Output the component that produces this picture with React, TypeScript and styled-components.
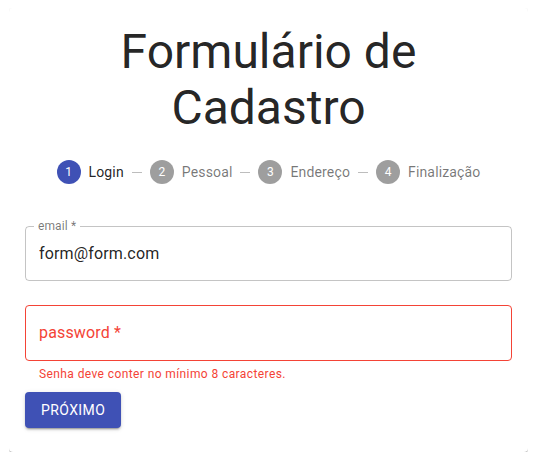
import React from "react";
import styled, { createGlobalStyle } from "styled-components";

const GlobalStyle = createGlobalStyle`
  body {
    margin: 8px 8px 8px 9px;
    background: #ffffff;
    font-family: Roboto, "Noto Sans", Arial, sans-serif;
    -webkit-font-smoothing: antialiased;
  }
  * { box-sizing: border-box; }
`;

const Card = styled.div`
  background: #fff;
  border-radius: 4px;
  box-shadow: 0px 2px 1px -1px rgba(0, 0, 0, 0.2), 0px 1px 1px 0px rgba(0, 0, 0, 0.14),
    0px 1px 3px 0px rgba(0, 0, 0, 0.12);
  padding: 16px 16px 24px;
  display: flex;
  flex-direction: column;
`;

const Title = styled.h1`
  margin: 0;
  font-family: Roboto, sans-serif;
  font-size: 48px;
  font-weight: 400;
  line-height: 56px;
  color: rgba(0, 0, 0, 0.87);
  text-align: center;
`;

const Stepper = styled.div`
  display: flex;
  justify-content: center;
  align-items: center;
  padding: 24px;
`;

const Step = styled.div`
  display: flex;
  align-items: center;
  padding: 0 8px;
`;

const StepIcon = styled.span<{ $active?: boolean }>`
  width: 24px;
  height: 24px;
  border-radius: 50%;
  background: ${(p) => (p.$active ? "#3f51b5" : "rgba(0, 0, 0, 0.38)")};
  color: #fff;
  font-size: 12px;
  line-height: 24px;
  text-align: center;
  margin-right: 8px;
  flex: none;
`;

const StepLabel = styled.span<{ $active?: boolean }>`
  font-size: 14px;
  line-height: 20px;
  color: ${(p) => (p.$active ? "rgba(0, 0, 0, 0.87)" : "rgba(0, 0, 0, 0.54)")};
  letter-spacing: 0.01071em;
`;

const Connector = styled.span`
  width: 10px;
  border-top: 1px solid #bdbdbd;
  flex: none;
`;

const Outlined = styled.fieldset<{ $error?: boolean; $mt: number }>`
  margin: ${(p) => p.$mt}px 0 0;
  padding: 0 13px;
  min-width: 0;
  border: 1px solid ${(p) => (p.$error ? "#f44336" : "rgba(0, 0, 0, 0.23)")};
  border-radius: 4px;
  display: block;
`;

const Legend = styled.legend`
  margin-left: -5px;
  padding: 0 4px;
  font-size: 12px;
  line-height: 11px;
  height: 11px;
  color: rgba(0, 0, 0, 0.54);
  letter-spacing: 0.00938em;
`;

const InputText = styled.div<{ $error?: boolean; $pt: number; $pb: number }>`
  padding: ${(p) => p.$pt}px 0 ${(p) => p.$pb}px;
  font-size: 16px;
  line-height: 19px;
  height: ${(p) => p.$pt + p.$pb + 19}px;
  color: ${(p) => (p.$error ? "#f44336" : "rgba(0, 0, 0, 0.87)")};
  letter-spacing: 0.00938em;
`;

const Helper = styled.p`
  margin: 3px 14px 0;
  font-size: 12px;
  line-height: 20px;
  color: #f44336;
  letter-spacing: 0.03333em;
`;

const Button = styled.button`
  align-self: flex-start;
  margin-top: 8px;
  height: 36px;
  padding: 6px 16px;
  border: none;
  border-radius: 4px;
  background: #3f51b5;
  color: #fff;
  font-family: Roboto, sans-serif;
  font-size: 14px;
  font-weight: 400;
  line-height: 24px;
  letter-spacing: 0.02857em;
  text-transform: uppercase;
  box-shadow: 0px 3px 1px -2px rgba(0, 0, 0, 0.2), 0px 2px 2px 0px rgba(0, 0, 0, 0.14),
    0px 1px 5px 0px rgba(0, 0, 0, 0.12);
  cursor: pointer;
`;

const steps = ["Login", "Pessoal", "Endereço", "Finalização"];

export default function App() {
  return (
    <>
      <GlobalStyle />
      <Card>
        <Title>
          Formulário de
          <br />
          Cadastro
        </Title>
        <Stepper>
          {steps.map((s, i) => (
            <React.Fragment key={s}>
              {i > 0 && <Connector />}
              <Step>
                <StepIcon $active={i === 0}>{i + 1}</StepIcon>
                <StepLabel $active={i === 0}>{s}</StepLabel>
              </Step>
            </React.Fragment>
          ))}
        </Stepper>
        <Outlined $mt={13}>
          <Legend>email *</Legend>
          <InputText $pt={12} $pb={17}>form@form.com</InputText>
        </Outlined>
        <Outlined $mt={24} $error>
          <InputText $error $pt={17} $pb={18}>password *</InputText>
        </Outlined>
        <Helper>Senha deve conter no mínimo 8 caracteres.</Helper>
        <Button>Próximo</Button>
      </Card>
    </>
  );
}
